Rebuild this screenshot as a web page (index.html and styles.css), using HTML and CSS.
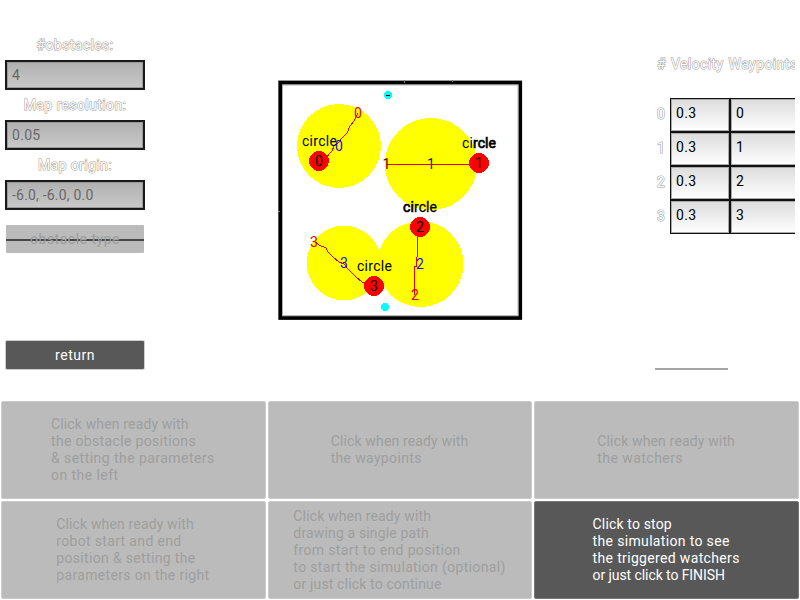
FILE: index.html
```
<!DOCTYPE html>
<html lang="en">
<head>
<meta charset="utf-8">
<title>Simulation</title>
<link rel="stylesheet" href="styles.css">
</head>
<body>
<main class="top">
  <section class="params">
    <label class="ghost">#obstacles:</label>
    <div class="field">4</div>
    <label class="ghost">Map resolution:</label>
    <div class="field">0.05</div>
    <label class="ghost">Map origin:</label>
    <div class="field origin">-6.0, -6.0, 0.0</div>
    <div class="spinner">obstacle type</div>
    <div class="return">return</div>
  </section>
  <svg class="map" width="250" height="250" viewBox="275 75 250 250">
    <rect x="278.5" y="80.5" width="243" height="239" fill="none" stroke="#aaa"/>
    <rect x="280.3" y="82.7" width="240" height="235.300" fill="#fff" stroke="#000" stroke-width="3.6"/>
    <rect x="282.5" y="85" width="235.500" height="230.500" fill="none" stroke="#999" stroke-width="0.7"/>
    <path d="M404.5 80v3M452.5 80v2M278 211.500h2" stroke="#777"/>
    <g fill="#ff0" shape-rendering="crispEdges">
      <circle cx="339" cy="146" r="42"/>
      <circle cx="431" cy="164" r="46"/>
      <circle cx="344" cy="263" r="37.300"/>
      <circle cx="420.500" cy="264" r="43"/>
    </g>
    <g fill="none" stroke="#e00000" shape-rendering="crispEdges">
      <path d="M358 113L354 121 350 126 347 133 342 138 339 142 334 146 332 151 329 154 327 157 321 161"/>
      <path d="M386 164.500h93"/>
      <path d="M417.500 227v28l-1 4v7l-2 1v28"/>
      <path d="M314 241l5 4 7 3 2 4 5 5 6 5 5 2 4 5 8 8 6 5 12 4"/>
    </g>
    <g fill="red" shape-rendering="crispEdges">
      <circle cx="319" cy="161" r="10"/>
      <circle cx="479" cy="163" r="10"/>
      <circle cx="420" cy="227" r="10"/>
      <circle cx="374" cy="286" r="10"/>
    </g>
    <g fill="#0ff" shape-rendering="crispEdges">
      <circle cx="388" cy="95" r="4"/>
      <circle cx="385" cy="307" r="4"/>
    </g>
    <path d="M386 95.500h4" stroke="#000"/>
    <g class="digits" fill="#000">
      <text x="319" y="166">0</text><text x="479" y="168">1</text>
      <text x="420" y="232">2</text><text x="374" y="291">3</text>
      <text x="386.500" y="169" fill="#700">1</text>
    </g>
    <g class="digits" fill="#1414e0">
      <text x="339" y="151">0</text><text x="431" y="169" fill="#225">1</text>
      <text x="420" y="269">2</text><text x="344" y="268">3</text>
    </g>
    <g class="digits" fill="#e00000">
      <text x="358" y="118">0</text><text x="415" y="300">2</text><text x="314" y="247">3</text>
    </g>
    <g class="names">
      <text x="302" y="146" textLength="35">circle</text>
      <text x="462" y="148" textLength="34">ci<tspan class="heavy">rcle</tspan></text>
      <text x="403" y="212" textLength="34"><tspan class="heavy">ci</tspan><tspan class="mid">rcle</tspan></text>
      <text x="357" y="271" textLength="35">circle</text>
    </g>
  </svg>
  <section class="speeds">
    <div class="heading ghost"><span>#</span><span>Velocity</span><span>Waypoints</span></div>
    <div class="row"><span class="ghost">0</span><div class="cell">0.3</div><div class="cell">0</div></div>
    <div class="row"><span class="ghost">1</span><div class="cell">0.3</div><div class="cell">1</div></div>
    <div class="row"><span class="ghost">2</span><div class="cell">0.3</div><div class="cell">2</div></div>
    <div class="row"><span class="ghost">3</span><div class="cell">0.3</div><div class="cell">3</div></div>
    <div class="rule"></div>
  </section>
</main>
<nav class="steps">
  <div class="step"><p><span class="tight">Click when ready with</span><br>the obstacle positions<br><span class="wide">&amp; setting the parameters</span><br><span class="wide">on the left</span></p></div>
  <div class="step"><p><span class="tight">Click when ready with</span><br>the waypoints</p></div>
  <div class="step"><p><span class="tight">Click when ready with</span><br><span class="wide">the watchers</span></p></div>
  <div class="step"><p><span class="tight">Click when ready with</span><br>robot start and end<br>position &amp; setting the<br>parameters on the right</p></div>
  <div class="step"><p><span class="tight">Click when ready with</span><br><span class="tight">drawing a single path</span><br>from start to end position<br>to start the simulation (optional)<br><span class="tight">or just click to continue</span></p></div>
  <div class="step active"><p><span class="tight">Click to stop</span><br>the simulation to see<br>the triggered watchers<br><span class="tighter">or just click to FINISH</span></p></div>
</nav>
</body>
</html>
```
FILE: styles.css
```
* { box-sizing: border-box; }
body {
  margin: 0;
  width: 800px;
  height: 600px;
  overflow: hidden;
  background: #fff;
  font: 14px/17px Roboto, sans-serif;
  letter-spacing: 0.3px;
}
.top {
  height: 400px;
  display: flex;
}
.params {
  width: 145px;
  flex: none;
  padding: 30px 0 0 5px;
  display: flex;
  flex-direction: column;
}
.ghost {
  color: #fff;
  -webkit-text-stroke: 1px #999;
  paint-order: stroke fill;
}
.params .ghost {
  height: 30px;
  line-height: 30px;
  text-align: center;
  letter-spacing: 0.4px;
}
.field {
  height: 30px;
  border: 2px solid #17191b;
  box-shadow: inset 0 0 0 1px #999;
  background: linear-gradient(#b0b0b0, #c9c9c9);
  color: #686868;
  line-height: 26px;
  padding-left: 5px;
}
.origin { letter-spacing: 0.2px; }
.spinner, .return {
  height: 28px;
  margin: 15px 1px 0;
  border-radius: 1px;
  text-align: center;
  line-height: 28px;
  letter-spacing: 0.5px;
}
.spinner {
  background: linear-gradient(#bbb 14px, #484848 14px, #484848 16px, #bbb 16px);
  color: #9b9b9b;
}
.return {
  margin-top: 88px;
  background: #585858;
  color: #fff;
  box-shadow: 0 0 0 1px #ccc;
}
.map {
  flex: none;
  margin: 75px 0 0 130px;
  font-family: Roboto, sans-serif;
}
.digits {
  font-size: 14px;
  letter-spacing: 0;
  text-anchor: middle;
}
.names { font-size: 14px; letter-spacing: 0; }
.heavy { stroke: #000; stroke-width: 0.7px; }
.mid { stroke: #000; stroke-width: 0.3px; }
.speeds {
  width: 145px;
  flex: none;
  margin: 0 5px 0 auto;
  overflow: hidden;
  padding: 55px 0 0 5px;
}
.heading {
  display: flex;
  gap: 5px;
  height: 43px;
  padding: 1px 0 0 2px;
  white-space: nowrap;
  letter-spacing: 0.4px;
}
.row { display: flex; height: 34px; }
.row .ghost {
  width: 15px;
  flex: none;
  line-height: 32px;
  padding-left: 2px;
}
.cell {
  width: 60px;
  flex: none;
  border: 1px solid #111;
  box-shadow: inset 0 0 0 1px #aaa;
  background: linear-gradient(#dcdcdc, #fff);
  line-height: 29px;
  padding-left: 5px;
}
.cell + .cell { width: 80px; }
.rule {
  width: 73px;
  height: 2px;
  margin-top: 134px;
  background: #a5a5a5;
}
.steps {
  height: 200px;
  padding: 1px;
  display: grid;
  grid-template-columns: repeat(3, 1fr);
  grid-template-rows: 1fr 1fr;
  gap: 2px;
}
.step {
  display: flex;
  align-items: center;
  justify-content: center;
  border: 1px solid #ccc;
  border-radius: 2px;
  background: #bbb;
  color: #9e9e9e;
}
.step p {
  margin: 0 0 0 -1px;
  white-space: nowrap;
  letter-spacing: 0.34px;
}
.tight { letter-spacing: 0.15px; }
.tighter { letter-spacing: -0.08px; }
.wide { letter-spacing: 0.45px; }
.active {
  background: #585858;
  border-color: #777;
  color: #fff;
}
```
